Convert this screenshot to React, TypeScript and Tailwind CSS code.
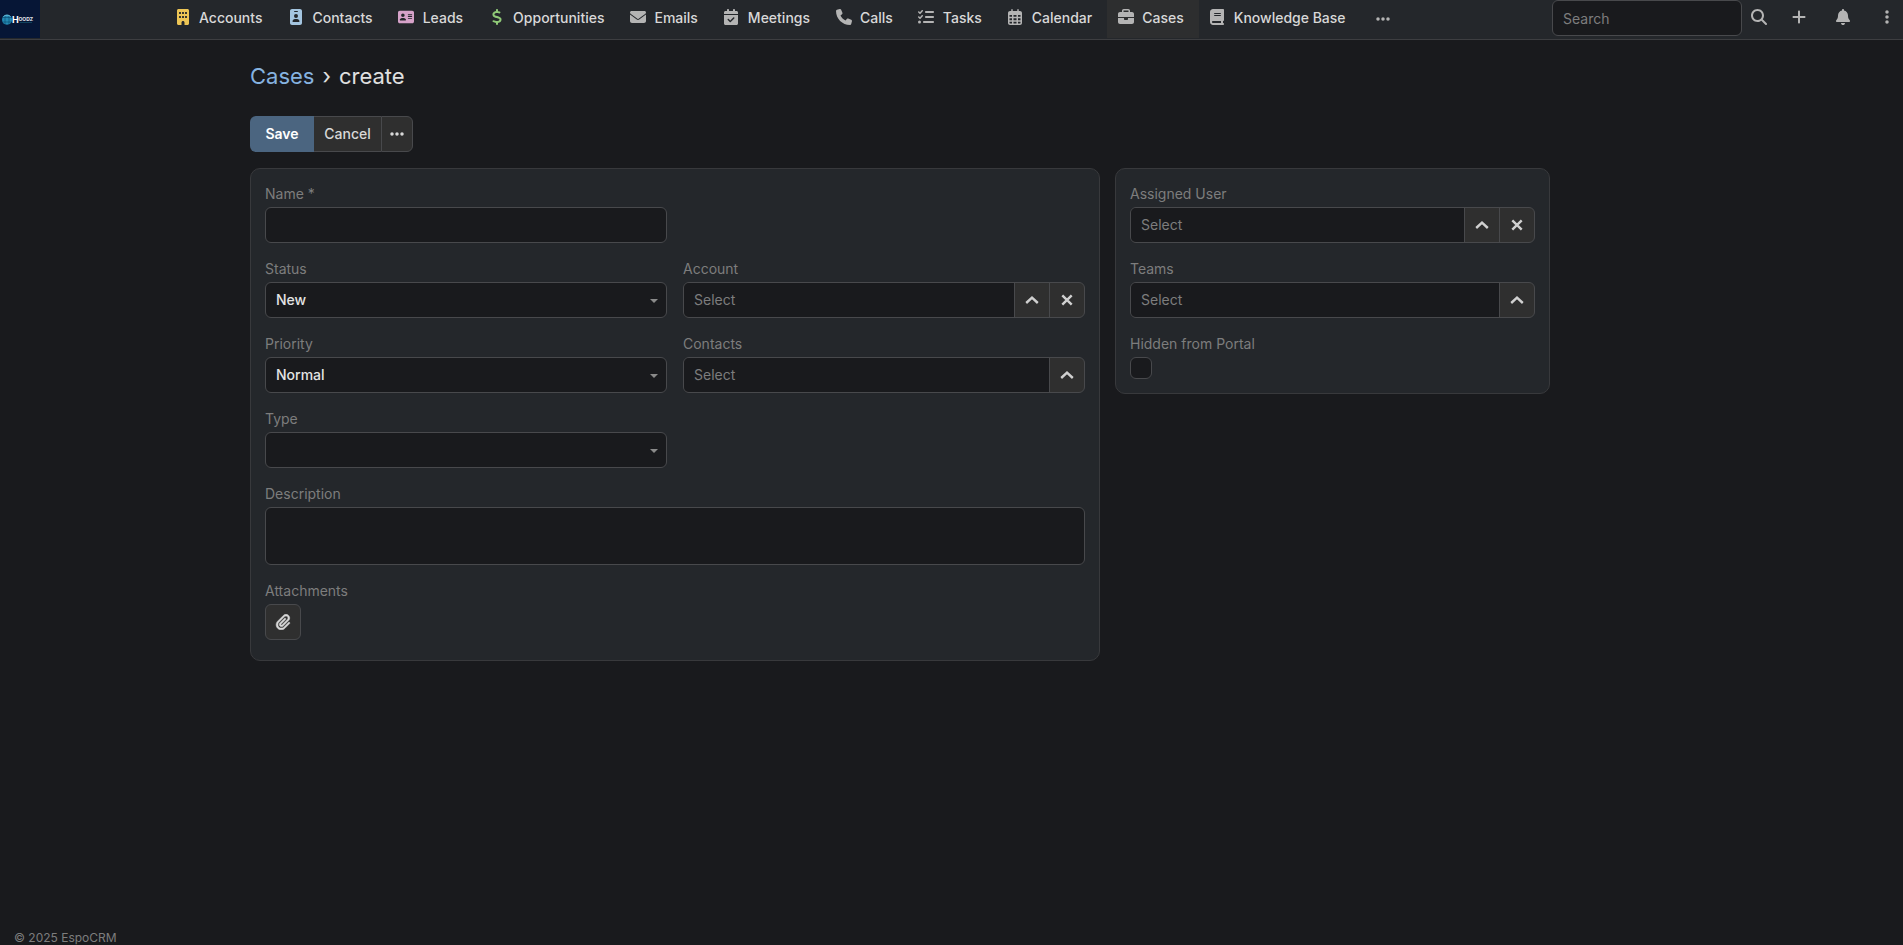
import React from 'react';
import {
  FaAddressCard,
  FaBell,
  FaBook,
  FaBriefcase,
  FaBuilding,
  FaCalendarCheck,
  FaDollarSign,
  FaEllipsis,
  FaEllipsisVertical,
  FaEnvelope,
  FaIdBadge,
  FaListCheck,
  FaMagnifyingGlass,
  FaPaperclip,
  FaPhone,
  FaPlus,
  FaRegCalendarDays,
} from 'react-icons/fa6';

const tabs = [
  { label: 'Accounts', icon: FaBuilding, color: 'text-[#edc555]' },
  { label: 'Contacts', icon: FaIdBadge, color: 'text-[#a4c5e0]' },
  { label: 'Leads', icon: FaAddressCard, color: 'text-[#d6a2c9]' },
  { label: 'Opportunities', icon: FaDollarSign, color: 'text-[#8fc977]' },
  { label: 'Emails', icon: FaEnvelope },
  { label: 'Meetings', icon: FaCalendarCheck },
  { label: 'Calls', icon: FaPhone },
  { label: 'Tasks', icon: FaListCheck },
  { label: 'Calendar', icon: FaRegCalendarDays },
  { label: 'Cases', icon: FaBriefcase, active: true },
  { label: 'Knowledge Base', icon: FaBook },
];

const Logo = () => (
  <svg viewBox="0 0 40 38" className="h-[38px] w-10" role="img" aria-label="Hoodz">
    <rect width="40" height="38" fill="#061636" />
    <circle cx="7" cy="19.7" r="5" fill="#2389b3" />
    <path d="M2.4 17.5h9.2M2.4 22h9.2M5 15v9.4M9 15v9.4" stroke="#0c466c" strokeWidth="0.6" />
    <path d="M3.5 16.5a5 5 0 0 1 7 0" stroke="#7fd0ea" strokeWidth="0.8" fill="none" />
    <text x="12" y="22.5" fontSize="9" fontWeight="700" fill="#ffffff" fontFamily="Inter, sans-serif">H</text>
    <text x="18.5" y="20.5" fontSize="5" fontWeight="700" fill="#e4e8ef" fontFamily="Inter, sans-serif">OODZ</text>
    <path d="M20 22.5h12" stroke="#11445f" strokeWidth="1" />
  </svg>
);

const ChevronIcon = () => (
  <svg viewBox="0 0 14 8" className="h-2 w-3.5" fill="none" stroke="currentColor" strokeWidth="2.4">
    <path d="M1.2 7 7 1.7 12.8 7" />
  </svg>
);

const CloseIcon = () => (
  <svg viewBox="0 0 12 12" className="size-3" fill="none" stroke="currentColor" strokeWidth="2.4">
    <path d="M1.3 1.3l9.4 9.4M10.7 1.3l-9.4 9.4" />
  </svg>
);

const Navbar = () => (
  <header className="flex h-10 items-start border-b border-[#3d3e41] bg-[#24272b]">
    <a href="#home" className="mr-[124px] shrink-0">
      <Logo />
    </a>
    <nav className="flex">
      {tabs.map(({ label, icon: Icon, color, active }) => (
        <a
          key={label}
          href={`#${label}`}
          className={`flex h-[38px] shrink-0 items-center pr-[15px] pb-1 pl-2 font-medium whitespace-nowrap text-[#d8d8d8] ${
            active ? 'bg-[#2d2e2f]' : ''
          }`}
        >
          <span className={`mr-1.5 flex w-[21px] justify-center pb-px ${color || 'text-[#b4b4b4]'}`}>
            <Icon className="h-4 w-auto shrink-0" />
          </span>
          <span className="pt-0.5">{label}</span>
        </a>
      ))}
      <button type="button" aria-label="More" className="flex h-[38px] w-[45px] items-center justify-center text-[#b4b4b4]">
        <FaEllipsis className="h-4 w-auto" />
      </button>
    </nav>
    <div className="ml-auto flex text-[#b4b4b4]">
      <input
        type="text"
        placeholder="Search"
        aria-label="Search"
        className="h-9 w-[190px] rounded-md border border-[#48494c] bg-[#191a1d] px-2.5 text-[#d8d8d8] placeholder:text-[#7d7d7d]"
      />
      <button type="button" aria-label="Run search" className="flex h-[34px] w-[34px] items-center justify-center">
        <FaMagnifyingGlass className="h-4 w-auto" />
      </button>
      <button type="button" aria-label="Quick create" className="flex h-[34px] w-[46px] items-center justify-center">
        <FaPlus className="h-4 w-auto" />
      </button>
      <button type="button" aria-label="Notifications" className="flex h-[34px] w-[42px] items-center justify-center">
        <FaBell className="h-4 w-auto" />
      </button>
      <button type="button" aria-label="Menu" className="flex h-[34px] w-[39px] items-center justify-end pr-2">
        <FaEllipsisVertical className="h-4 w-auto" />
      </button>
    </div>
  </header>
);

type FieldProps = { id: string; label: string; className?: string; children: React.ReactNode };

const Field = ({ id, label, className = '', children }: FieldProps) => (
  <div className={className}>
    <label htmlFor={id} className="mb-[3px] block leading-5 text-[#7d7d7d]">
      {label}
    </label>
    {children}
  </div>
);

const SelectBox = ({ id, options }: { id: string; options: string[] }) => (
  <div className="relative">
    <select
      id={id}
      className="block h-9 w-full appearance-none rounded-md border border-[#48494c] bg-[#191a1d] px-2.5 font-medium text-[#e4e4e4]"
    >
      {options.map((option) => (
        <option key={option}>{option}</option>
      ))}
    </select>
    <svg viewBox="0 0 8 4" className="pointer-events-none absolute top-[17px] right-[9px] h-1 w-2 fill-[#8a8a8a]">
      <path d="M0 0h8L4 4z" />
    </svg>
  </div>
);

const LinkBox = ({ id, name, clearable }: { id: string; name: string; clearable?: boolean }) => (
  <div className="flex h-9 overflow-hidden rounded-md border border-[#48494c] bg-[#2f2f2f] text-[#d0d0d0]">
    <input
      id={id}
      type="text"
      placeholder="Select"
      className="min-w-0 flex-1 bg-[#191a1d] px-2.5 placeholder:text-[#7d7d7d]"
    />
    <button
      type="button"
      aria-label={`Select ${name}`}
      className="flex w-[35px] items-center justify-center border-l border-[#48494c]"
    >
      <ChevronIcon />
    </button>
    {clearable && (
      <button
        type="button"
        aria-label={`Clear ${name}`}
        className="flex w-[35px] items-center justify-center border-l border-[#48494c]"
      >
        <CloseIcon />
      </button>
    )}
  </div>
);

const App = () => {
  return (
    <div className="flex min-h-screen flex-col bg-[#191a1d] font-['Inter',sans-serif] text-sm text-[#d8d8d8]">
      <Navbar />

      <main className="ml-[250px] w-full max-w-[1300px] flex-1">
        <h1 className="flex gap-2 pt-[22px] text-[22px] leading-7 text-[#e0e0e0]">
          <a href="#Cases" className="text-[#86b3e0]">Cases</a>
          <span>›</span>
          <span>create</span>
        </h1>

        <div className="mt-[26px] flex h-9">
          <button type="button" className="w-16 rounded-l-md bg-[#4b6580] font-semibold text-white">
            Save
          </button>
          <button type="button" className="w-[67px] border-y border-[#48494c] bg-[#2f2f2f] font-medium">
            Cancel
          </button>
          <button
            type="button"
            aria-label="More actions"
            className="flex w-8 items-center justify-center rounded-r-md border border-[#48494c] bg-[#2f2f2f]"
          >
            <FaEllipsis className="h-4 w-auto" />
          </button>
        </div>

        <form className="mt-4 grid grid-cols-[850fr_435fr] items-start gap-[15px]">
          <section className="grid grid-cols-2 gap-4 rounded-[10px] border border-[#38393c] bg-[#24272b] px-3.5 pt-[15px] pb-5">
            <Field id="name" label="Name *">
              <input
                id="name"
                type="text"
                className="block h-9 w-full rounded-md border border-[#48494c] bg-[#191a1d] px-2.5"
              />
            </Field>
            <Field id="status" label="Status" className="col-start-1">
              <SelectBox id="status" options={['New', 'Assigned', 'Pending', 'Closed']} />
            </Field>
            <Field id="account" label="Account">
              <LinkBox id="account" name="account" clearable />
            </Field>
            <Field id="priority" label="Priority">
              <SelectBox id="priority" options={['Normal', 'Low', 'High', 'Urgent']} />
            </Field>
            <Field id="contacts" label="Contacts">
              <LinkBox id="contacts" name="contacts" />
            </Field>
            <Field id="type" label="Type">
              <SelectBox id="type" options={['', 'Question', 'Incident', 'Problem']} />
            </Field>
            <Field id="description" label="Description" className="col-span-2">
              <textarea
                id="description"
                className="block h-[58px] w-full resize-none rounded-md border border-[#48494c] bg-[#191a1d] px-2.5 py-2"
              />
            </Field>
            <Field id="attachments" label="Attachments">
              <button
                id="attachments"
                type="button"
                className="flex size-9 items-center justify-center rounded-md border border-[#48494c] bg-[#2f2f2f]"
              >
                <FaPaperclip className="h-4 w-auto stroke-current stroke-[16]" />
              </button>
            </Field>
          </section>

          <section className="grid gap-4 rounded-[10px] border border-[#38393c] bg-[#24272b] px-3.5 pt-[15px] pb-3.5">
            <Field id="assigned-user" label="Assigned User">
              <LinkBox id="assigned-user" name="assigned user" clearable />
            </Field>
            <Field id="teams" label="Teams">
              <LinkBox id="teams" name="teams" />
            </Field>
            <Field id="hidden-from-portal" label="Hidden from Portal">
              <input
                id="hidden-from-portal"
                type="checkbox"
                className="block size-[22px] appearance-none rounded-md border border-[#48494c] bg-[#191a1d]"
              />
            </Field>
          </section>
        </form>
      </main>

      <footer className="px-3.5 text-xs leading-[14px] text-[#7d7d7d]">© 2025 EspoCRM</footer>
    </div>
  );
};

export default App;
